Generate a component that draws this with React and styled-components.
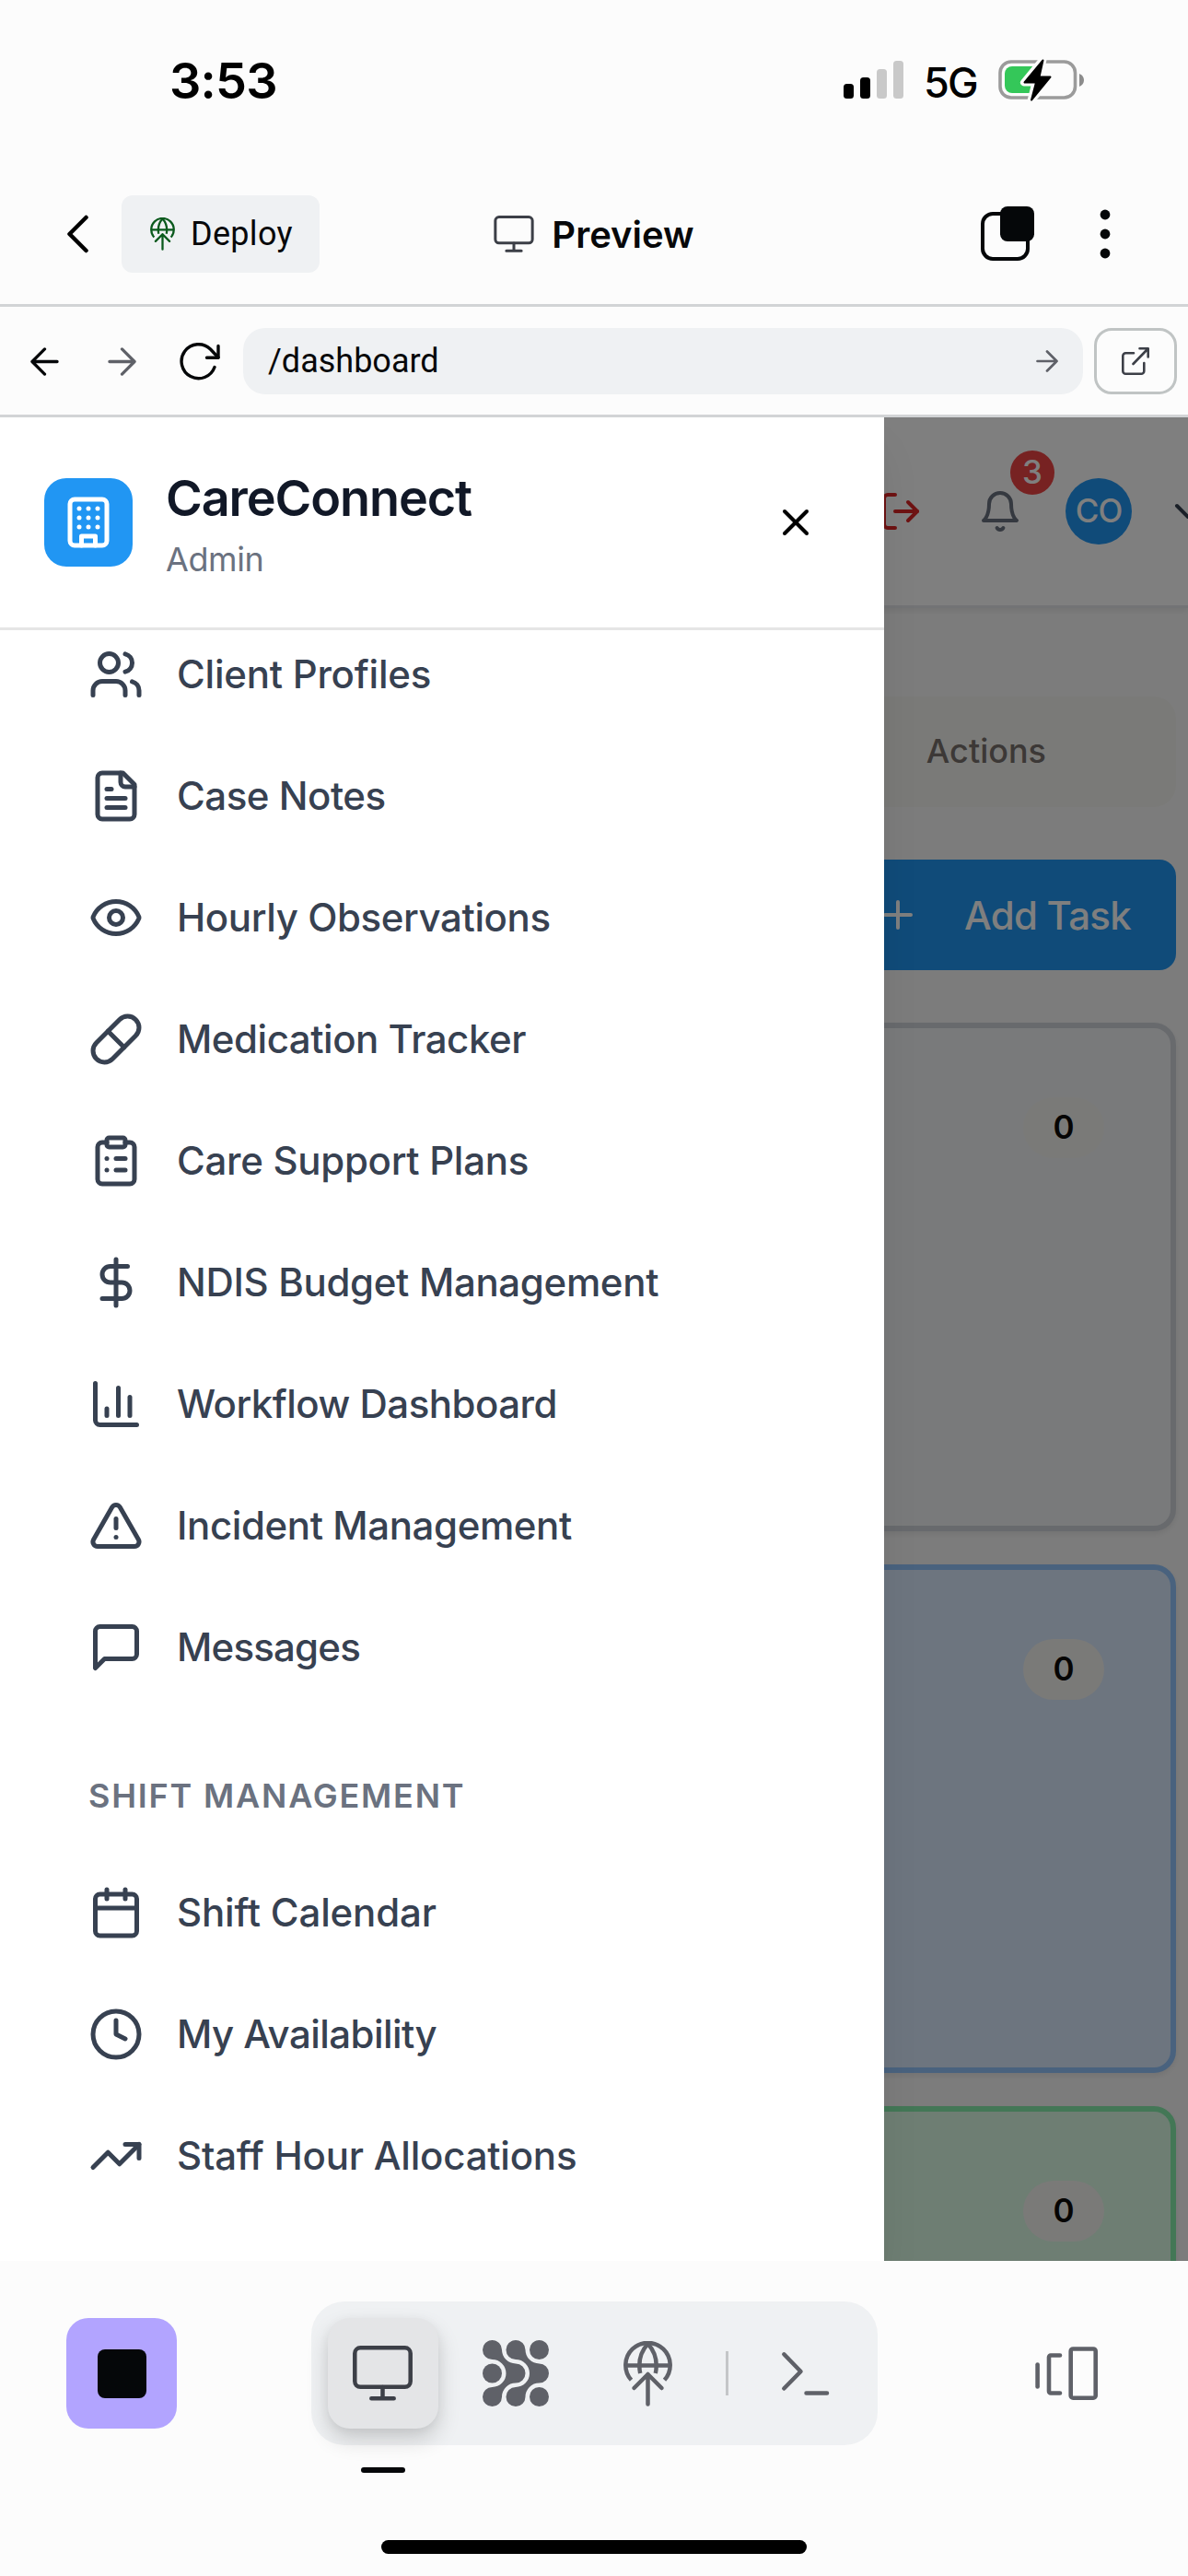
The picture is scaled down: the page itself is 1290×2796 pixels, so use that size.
import React from "react";
import styled, { createGlobalStyle } from "styled-components";

const SANS = `"Inter", "Liberation Sans", sans-serif`;
const PLEX = `"Roboto", "Liberation Sans", sans-serif`;

const GlobalStyle = createGlobalStyle`
  *, *::before, *::after { box-sizing: border-box; }
  html, body { margin: 0; padding: 0; background: #fcfcfc; }
  body { font-family: ${SANS}; }
  svg { display: block; flex: none; }
  button { border: 0; padding: 0; margin: 0; background: none; font: inherit; color: inherit; }
`;

const Screen = styled.div`
  width: 1290px;
  height: 2796px;
  display: flex;
  flex-direction: column;
  overflow: hidden;
  background: #fcfcfc;
`;

/* ---------- status bar ---------- */

const StatusBar = styled.header`
  height: 177px;
  flex: none;
  display: flex;
  justify-content: space-between;
  align-items: flex-start;
  padding: 55px 113px 0 184px;
`;

const Time = styled.div`
  font-size: 54px;
  font-weight: 600;
  line-height: 66px;
  letter-spacing: -0.8px;
  color: #000;
`;

const StatusIcons = styled.div`
  display: flex;
  align-items: flex-start;
  padding-top: 9px;
`;

const Network = styled.span`
  margin: 0 22px 0 22px;
  width: 59px;
  font-size: 45px;
  font-weight: 500;
  line-height: 52px;
  letter-spacing: -1.8px;
  color: #000;
`;

/* ---------- title bar ---------- */

const TitleBar = styled.div`
  height: 156px;
  flex: none;
  display: grid;
  grid-template-columns: 1fr auto 1fr;
  align-items: center;
  padding: 1px 72px 0;
  border-bottom: 3px solid #d2d4d6;
`;

const TitleLeft = styled.div`
  display: flex;
  align-items: center;
  gap: 36px;
`;

const DeployButton = styled.button`
  width: 215px;
  height: 84px;
  display: flex;
  align-items: center;
  gap: 17px;
  padding-left: 31px;
  border-radius: 12px;
  background: #eff1f3;
  color: #0b5a1d;
`;

const DeployLabel = styled.span`
  font-family: ${PLEX};
  font-size: 36px;
  line-height: 48px;
  letter-spacing: 0.3px;
  color: #07080a;
`;

const Title = styled.h1`
  margin: 0;
  display: flex;
  align-items: center;
  gap: 19px;
  font-family: ${SANS};
  font-size: 40px;
  font-weight: 580;
  letter-spacing: 0;
  color: #07080a;

  svg { color: #3c3f47; }
`;

const TitleRight = styled.div`
  display: flex;
  justify-content: flex-end;
  align-items: center;
  gap: 71px;
  padding-right: 12px;
  color: #050709;
`;

/* ---------- address bar ---------- */

const AddressBar = styled.div`
  height: 120px;
  flex: none;
  display: flex;
  align-items: center;
  gap: 12px;
  padding: 1px 12px 0 24px;
  border-bottom: 3px solid #d2d4d6;
  color: #050709;
`;

const NavButton = styled.button`
  width: ${(p) => p.$w || 48}px;
  height: 72px;
  flex: none;
  display: flex;
  align-items: center;
  justify-content: center;
  margin-right: ${(p) => p.$after || 0}px;
  color: ${(p) => (p.$muted ? "#5f6168" : "#050709")};
`;

const UrlField = styled.div`
  flex: 1;
  height: 72px;
  display: flex;
  align-items: center;
  justify-content: space-between;
  padding: 0 27px;
  border-radius: 24px;
  background: #eff1f3;
  color: #5f6168;
`;

const UrlText = styled.span`
  font-family: ${PLEX};
  font-size: 36px;
  line-height: 48px;
  color: #07080a;
`;

const OpenButton = styled.button`
  width: 90px;
  height: 72px;
  flex: none;
  display: flex;
  align-items: center;
  justify-content: center;
  border: 3px solid #c0c4c4;
  border-radius: 19px;
  color: #3c3f47;
`;

/* ---------- web view ---------- */

const WebView = styled.main`
  position: relative;
  height: 2001px;
  flex: none;
  overflow: hidden;
  background: #f9f9f9;
`;

const AppHeader = styled.div`
  height: 207px;
  display: flex;
  align-items: flex-start;
  padding: 66px 0 0 954px;
  background: #fff;
  border-bottom: 3px solid #e5e7eb;
  box-shadow: 0 3px 6px rgba(0, 0, 0, 0.08);
`;

const HeaderIcon = styled.div`
  width: 48px;
  height: 72px;
  flex: none;
  display: flex;
  align-items: center;
  margin-right: ${(p) => p.$after || 0}px;
  color: ${(p) => p.$color};
`;

const BellSlot = styled(HeaderIcon)`
  position: relative;
`;

const Badge = styled.span`
  position: absolute;
  left: 35px;
  top: -30px;
  width: 48px;
  height: 48px;
  border-radius: 50%;
  background: #ef4444;
  color: #fff;
  font-size: 35px;
  font-weight: 500;
  line-height: 47px;
  text-align: center;
`;

const Avatar = styled.div`
  width: 72px;
  height: 72px;
  flex: none;
  margin-right: 37px;
  border-radius: 50%;
  background: #2196f3;
  color: #fff;
  font-size: 35px;
  font-weight: 550;
  line-height: 71px;
  letter-spacing: -1px;
  text-align: center;
`;

const AppBody = styled.div`
  display: flex;
  flex-direction: column;
  align-items: stretch;
  padding: 96px 13px 0 12px;
`;

const TabList = styled.div`
  height: 120px;
  display: flex;
  align-items: center;
  justify-content: flex-end;
  padding: 0 141px 2px 0;
  border-radius: 24px;
  background: #f5f5f1;
  color: #78716c;
  font-size: 36px;
  font-weight: 500;
`;

const AddTask = styled.button`
  align-self: flex-end;
  width: 374px;
  height: 120px;
  margin: 57px 0;
  display: flex;
  align-items: center;
  gap: 48px;
  padding-left: 48px;
  border-radius: 18px;
  background: #2196f3;
  color: #fff;
  font-size: 42px;
  font-weight: 500;
  letter-spacing: -0.75px;
  white-space: nowrap;
`;

const Columns = styled.div`
  display: flex;
  flex-direction: column;
  gap: 36px;
`;

const Column = styled.section`
  height: 552px;
  flex: none;
  display: flex;
  justify-content: flex-end;
  align-items: flex-start;
  padding: 75px 72px;
  border: 6px solid ${(p) => p.$edge};
  border-radius: 24px;
  background: ${(p) => p.$fill};
  box-shadow: 0 3px 6px rgba(0, 0, 0, 0.08);
`;

const Count = styled.span`
  width: 88px;
  height: 66px;
  border-radius: 33px;
  background: #f5f5f1;
  color: #0c0a09;
  font-size: 35px;
  font-weight: 600;
  line-height: 65px;
  text-align: center;
`;

const Dimmer = styled.div`
  position: absolute;
  inset: 0;
  background: rgba(0, 0, 0, 0.5);
`;

const Sidebar = styled.aside`
  position: absolute;
  left: 0;
  top: 0;
  width: 960px;
  height: 100%;
  display: flex;
  flex-direction: column;
  background: #fff;
  box-shadow: 0 30px 45px -9px rgba(0, 0, 0, 0.1), 0 12px 18px -12px rgba(0, 0, 0, 0.1);
`;

const SidebarHeader = styled.div`
  height: 231px;
  flex: none;
  display: flex;
  align-items: center;
  padding: 0 72px 0 48px;
  border-bottom: 3px solid #e5e5e5;
`;

const Logo = styled.div`
  width: 96px;
  height: 96px;
  display: flex;
  align-items: center;
  justify-content: center;
  border-radius: 24px;
  background: #2196f3;
  color: #fff;
`;

const Brand = styled.div`
  flex: 1;
  margin-left: 36px;
`;

const BrandName = styled.div`
  padding-top: 4px;
  font-size: 54px;
  font-weight: 600;
  line-height: 76px;
  letter-spacing: -1.1px;
  color: #111827;
`;

const BrandRole = styled.div`
  font-size: 36px;
  line-height: 56px;
  letter-spacing: -0.4px;
  color: #6b7280;
`;

const NavScroll = styled.nav`
  display: flex;
  flex-direction: column;
  overflow: hidden;
  padding-left: 96px;
`;

const NavGroup = styled.div`
  display: flex;
  flex-direction: column;
  margin-top: ${(p) => p.$offset || 0}px;
`;

const NavItem = styled.a`
  height: 132px;
  display: flex;
  align-items: center;
  gap: 36px;
  color: #374151;
`;

const NavLabel = styled.span`
  padding-bottom: 1px;
  font-size: 42px;
  font-weight: 500;
  letter-spacing: ${(p) => p.$track}px;
  white-space: nowrap;
`;

const GroupLabel = styled.div`
  height: 60px;
  margin-top: 66px;
  color: #6b7280;
  font-size: 36px;
  font-weight: 600;
  line-height: 59px;
  letter-spacing: 1.8px;
`;

/* ---------- bottom dock ---------- */

const BottomBar = styled.footer`
  flex: 1;
  display: flex;
  flex-direction: column;
  padding-top: 44px;
`;

const DockRow = styled.div`
  height: 156px;
  display: flex;
  align-items: center;
  justify-content: space-between;
  padding: 0 72px;
`;

const StopButton = styled.button`
  width: 120px;
  height: 120px;
  display: flex;
  align-items: center;
  justify-content: center;
  border-radius: 24px;
  background: #b2a4ff;
`;

const StopSquare = styled.span`
  width: 53px;
  height: 53px;
  border-radius: 8px;
  background: #050709;
`;

const Dock = styled.div`
  height: 156px;
  display: flex;
  align-items: center;
  gap: 24px;
  padding: 0 18px;
  border-radius: 36px;
  background: #eff1f3;
`;

const DockTab = styled.button`
  width: 120px;
  height: 120px;
  display: flex;
  align-items: center;
  justify-content: center;
  border-radius: 24px;
  color: ${(p) => (p.$active ? "#3c3f47" : "#5f6168")};
  background: ${(p) => (p.$active ? "#e4e5e7" : "transparent")};
  box-shadow: ${(p) => (p.$active ? "0 12px 24px rgba(0,0,0,0.16), 0 3px 12px rgba(0,0,0,0.05)" : "none")};
`;

const DockDivider = styled.span`
  width: 3px;
  height: 48px;
  background: #c4c6c8;
`;

const PageMark = styled.span`
  width: 48px;
  height: 6px;
  margin: 24px 0 0 392px;
  border-radius: 3px;
  background: #050709;
`;

const HomeIndicator = styled.span`
  align-self: center;
  width: 462px;
  height: 15px;
  margin-top: 73px;
  border-radius: 8px;
  background: #000;
`;

/* ---------- icons ---------- */

const stroke = { fill: "none", stroke: "currentColor", strokeLinecap: "round", strokeLinejoin: "round" };

const Icon = ({ name, size = 60, w = 2 }) => (
  <svg width={size} height={size} viewBox="0 0 24 24" {...stroke} strokeWidth={w}>
    {ICONS[name].map((d) => (
      <path key={d} d={d} />
    ))}
  </svg>
);

const ICONS = {
  building: [
    "M6 2h12a2 2 0 0 1 2 2v16a2 2 0 0 1-2 2H6a2 2 0 0 1-2-2V4a2 2 0 0 1 2-2z",
    "M9 22v-4h6v4", "M8 6h.01", "M16 6h.01", "M12 6h.01", "M12 10h.01", "M12 14h.01",
    "M16 10h.01", "M16 14h.01", "M8 10h.01", "M8 14h.01",
  ],
  close: ["M18 6 6 18", "m6 6 12 12"],
  users: [
    "M16 21v-2a4 4 0 0 0-4-4H6a4 4 0 0 0-4 4v2", "M9 3a4 4 0 1 0 0 8a4 4 0 1 0 0-8z",
    "M22 21v-2a4 4 0 0 0-3-3.87", "M16 3.13a4 4 0 0 1 0 7.75",
  ],
  file: [
    "M15 2H6a2 2 0 0 0-2 2v16a2 2 0 0 0 2 2h12a2 2 0 0 0 2-2V7Z", "M14 2v4a2 2 0 0 0 2 2h4",
    "M10 9H8", "M16 13H8", "M16 17H8",
  ],
  eye: [
    "M2.062 12.348a1 1 0 0 1 0-.696 10.75 10.75 0 0 1 19.876 0 1 1 0 0 1 0 .696 10.75 10.75 0 0 1-19.876 0",
    "M12 9a3 3 0 1 0 0 6a3 3 0 1 0 0-6z",
  ],
  pill: ["m10.5 20.5 10-10a4.95 4.95 0 1 0-7-7l-10 10a4.95 4.95 0 1 0 7 7Z", "m8.5 8.5 7 7"],
  clipboard: [
    "M9 2h6a1 1 0 0 1 1 1v2a1 1 0 0 1-1 1H9a1 1 0 0 1-1-1V3a1 1 0 0 1 1-1z",
    "M16 4h2a2 2 0 0 1 2 2v14a2 2 0 0 1-2 2H6a2 2 0 0 1-2-2V6a2 2 0 0 1 2-2h2",
    "M12 11h4", "M12 16h4", "M8 11h.01", "M8 16h.01",
  ],
  dollar: ["M12 2v20", "M17 5H9.5a3.5 3.5 0 0 0 0 7h5a3.5 3.5 0 0 1 0 7H6"],
  chart: ["M3 3v16a2 2 0 0 0 2 2h16", "M18 17V9", "M13 17V5", "M8 17v-3"],
  alert: ["m21.73 18-8-14a2 2 0 0 0-3.48 0l-8 14A2 2 0 0 0 4 21h16a2 2 0 0 0 1.73-3", "M12 9v4", "M12 17h.01"],
  message: ["M21 15a2 2 0 0 1-2 2H7l-4 4V5a2 2 0 0 1 2-2h14a2 2 0 0 1 2 2z"],
  calendar: ["M8 2v4", "M16 2v4", "M5 4h14a2 2 0 0 1 2 2v14a2 2 0 0 1-2 2H5a2 2 0 0 1-2-2V6a2 2 0 0 1 2-2z", "M3 10h18"],
  clock: ["M12 2a10 10 0 1 0 0 20a10 10 0 1 0 0-20z", "M12 6v6l4 2"],
  trend: ["M22 7l-8.5 8.5-5-5L2 17", "M16 7h6v6"],
  logout: ["M9 21H5a2 2 0 0 1-2-2V5a2 2 0 0 1 2-2h4", "M16 17l5-5-5-5", "M21 12H9"],
  bell: ["M6 8a6 6 0 0 1 12 0c0 7 3 9 3 9H3s3-2 3-9", "M10.3 21a1.94 1.94 0 0 0 3.4 0"],
  chevron: ["m6 9 6 6 6-6"],
  plus: ["M5 12h14", "M12 5v14"],
};

const SignalIcon = () => (
  <svg width="65" height="43" viewBox="0 0 65 43">
    <rect x="0" y="27" width="11" height="16" rx="3.5" fill="#000" />
    <rect x="18" y="20" width="11" height="23" rx="3.5" fill="#000" />
    <rect x="36" y="11" width="11" height="32" rx="3.5" fill="#c9c9c9" />
    <rect x="54" y="2" width="11" height="41" rx="3.5" fill="#c9c9c9" />
  </svg>
);

const BatteryIcon = () => (
  <svg width="93" height="46" viewBox="0 0 93 46">
    <rect x="2" y="3" width="81.5" height="39" rx="12" fill="none" stroke="#9b9b9b" strokeWidth="3.6" />
    <path d="M88 16c3.2 1.2 5 4 5 7s-1.8 5.8-5 7z" fill="#8c8c8c" />
    <path d="M15 8h29v29H15a8 8 0 0 1-8-8V16a8 8 0 0 1 8-8z" fill="#34c759" />
    <path d="M48.5 0.5 28 25.5h12.5L35.5 45.5 57 19.5H44.5z" fill="#000" stroke="#fcfcfc" strokeWidth="8" strokeLinejoin="round" />
    <path d="M48.5 1.5 28.5 25.5h12.5L36 44.5 56.5 19.5H44.5z" fill="#000" stroke="#000" strokeWidth="2" strokeLinejoin="round" />
  </svg>
);

const BackChevron = () => (
  <svg width="24" height="42" viewBox="0 0 24 42" {...stroke} strokeWidth="4.5">
    <path d="M21.5 3 3.5 21l18 18" />
  </svg>
);

const GlobeUp = ({ width, height }) => (
  <svg width={width} height={height} viewBox="0 0 53 71" fill="none" stroke="currentColor" strokeWidth="4.5" strokeLinejoin="round">
    <path d="M8.5 42.3A24.2 24.2 0 1 1 44.5 42.3" />
    <path d="M2.5 26.4h48" />
    <path d="M26.5 3C20 10 17.3 18 17.3 26.5c0 3 .3 5.8.9 8.5" />
    <path d="M26.5 3C33 10 35.7 18 35.7 26.5c0 3-.3 5.8-.9 8.5" />
    <path d="M11.5 51 26.5 36l15 15M26.5 36v32.5" strokeLinecap="round" />
  </svg>
);

const Monitor = ({ width, height }) => (
  <svg width={width} height={height} viewBox="0 0 65 60" {...stroke} strokeWidth="4.5">
    <rect x="2.3" y="2.3" width="60.4" height="42.5" rx="6" />
    <path d="M32.5 45v12M20.3 57.3h24.4" />
  </svg>
);

const TabsIcon = () => (
  <svg width="58" height="60" viewBox="0 0 58 60">
    <rect x="2" y="8" width="49" height="49" rx="11" fill="none" stroke="currentColor" strokeWidth="4" />
    <rect x="21" y="0" width="37" height="38" rx="8" fill="currentColor" />
  </svg>
);

const MoreIcon = () => (
  <svg width="12" height="56" viewBox="0 0 12 56" fill="currentColor">
    <circle cx="6" cy="7" r="5.4" />
    <circle cx="6" cy="28" r="5.4" />
    <circle cx="6" cy="49" r="5.4" />
  </svg>
);

const Arrow = ({ size, flip, w = 3.4 }) => (
  <svg width={size} height={size} viewBox="0 0 32 32" {...stroke} strokeWidth={w} transform={flip ? "scale(-1 1)" : undefined}>
    <path d="M2 16h28M16 2l14 14-14 14" />
  </svg>
);

const Reload = () => (
  <svg width="44" height="42" viewBox="0 0 44 42" {...stroke} strokeWidth="3.4">
    <path d="M38 27.5A18.5 18.5 0 1 1 33.5 8L42 17" />
    <path d="M42 4.5V17.3H29.5" />
  </svg>
);

const OpenIcon = () => (
  <svg width="30" height="30" viewBox="0 0 30 30" {...stroke} strokeWidth="2.6">
    <path d="M13 6.2H4.3a3 3 0 0 0-3 3v16.5a3 3 0 0 0 3 3h17a3 3 0 0 0 3-3V17" />
    <path d="M19.5 1.3h9.2v9.2M28.5 1.5 12.5 18" />
  </svg>
);

const AgentIcon = () => {
  const ribbon =
    "M10.5 21A10.5 10.5 0 1 1 21 10.5A15 15 0 0 0 36 25.5A10.5 10.5 0 0 1 36 46.5A15 15 0 0 0 21 61.5A10.5 10.5 0 1 1 10.5 51A15 15 0 0 0 10.5 21Z";
  return (
    <svg width="72" height="72" viewBox="0 0 72 72" fill="currentColor">
      <path d={ribbon} />
      <path d={ribbon} transform="translate(25.5 0)" />
      <circle cx="61.5" cy="10.5" r="10.5" />
      <circle cx="10.5" cy="36" r="10.5" />
      <circle cx="61.5" cy="61.5" r="10.5" />
    </svg>
  );
};

const ShellIcon = () => (
  <svg width="54" height="50" viewBox="0 0 54 50" {...stroke} strokeWidth="4.5">
    <path d="M3.3 4.3 21.5 23 3.3 41.5M27.5 46.5H50" />
  </svg>
);

const PanelsIcon = () => (
  <svg width="68" height="58" viewBox="0 0 68 58" {...stroke} strokeWidth="4.6">
    <path d="M2.6 19.5v24" />
    <path d="M27 9.5H17a2 2 0 0 0-2 2v37a2 2 0 0 0 2 2h10" />
    <rect x="38.7" y="2.5" width="27" height="53.2" rx="2.5" />
  </svg>
);

/* ---------- data ---------- */

/* icon, label, letter spacing */
const CARE_LINKS = [
  ["users", "Client Profiles", -0.24],
  ["file", "Case Notes", -0.48],
  ["eye", "Hourly Observations", -0.4],
  ["pill", "Medication Tracker", -0.47],
  ["clipboard", "Care Support Plans", -0.3],
  ["dollar", "NDIS Budget Management", -0.33],
  ["chart", "Workflow Dashboard", -0.5],
  ["alert", "Incident Management", -0.4],
  ["message", "Messages", -0.8],
];

const SHIFT_LINKS = [
  ["calendar", "Shift Calendar", -0.17],
  ["clock", "My Availability", -0.57],
  ["trend", "Staff Hour Allocations", -0.22],
];

const TASK_COLUMNS = [
  { edge: "#d1d5db", fill: "#f3f4f6", count: 0 },
  { edge: "#93c5fd", fill: "#dbeafe", count: 0 },
  { edge: "#86efac", fill: "#dcfce7", count: 0 },
];

const links = (items) =>
  items.map(([icon, label, track]) => (
    <NavItem key={label}>
      <Icon name={icon} />
      <NavLabel $track={track}>{label}</NavLabel>
    </NavItem>
  ));

export default function App() {
  return (
    <>
      <GlobalStyle />
      <Screen>
        <StatusBar>
          <Time>3:53</Time>
          <StatusIcons>
            <SignalIcon />
            <Network>5G</Network>
            <BatteryIcon />
          </StatusIcons>
        </StatusBar>

        <TitleBar>
          <TitleLeft>
            <BackChevron />
            <DeployButton>
              <GlobeUp width={27} height={36} />
              <DeployLabel>Deploy</DeployLabel>
            </DeployButton>
          </TitleLeft>
          <Title>
            <Monitor width={44} height={40} />
            Preview
          </Title>
          <TitleRight>
            <TabsIcon />
            <MoreIcon />
          </TitleRight>
        </TitleBar>

        <AddressBar>
          <NavButton $after={24}><Arrow size={31} flip /></NavButton>
          <NavButton $after={24} $muted><Arrow size={31} /></NavButton>
          <NavButton $after={10} $w={50}><Reload /></NavButton>
          <UrlField>
            <UrlText>/dashboard</UrlText>
            <Arrow size={24} w={3.6} />
          </UrlField>
          <OpenButton><OpenIcon /></OpenButton>
        </AddressBar>

        <WebView>
          <AppHeader>
            <HeaderIcon $color="#dc2626" $after={60}><Icon name="logout" size={48} /></HeaderIcon>
            <BellSlot $color="#6b7280" $after={47}>
              <Icon name="bell" size={48} />
              <Badge>3</Badge>
            </BellSlot>
            <Avatar>CO</Avatar>
            <HeaderIcon $color="#374151"><Icon name="chevron" size={48} /></HeaderIcon>
          </AppHeader>
          <AppBody>
            <TabList>Actions</TabList>
            <AddTask>
              <Icon name="plus" size={48} />
              Add Task
            </AddTask>
            <Columns>
              {TASK_COLUMNS.map((c) => (
                <Column key={c.edge} $edge={c.edge} $fill={c.fill}>
                  <Count>{c.count}</Count>
                </Column>
              ))}
            </Columns>
          </AppBody>
          <Dimmer />
          <Sidebar>
            <SidebarHeader>
              <Logo><Icon name="building" /></Logo>
              <Brand>
                <BrandName>CareConnect</BrandName>
                <BrandRole>Admin</BrandRole>
              </Brand>
              <Icon name="close" size={48} />
            </SidebarHeader>
            <NavScroll>
              <NavGroup $offset={-18}>{links(CARE_LINKS)}</NavGroup>
              <GroupLabel>SHIFT MANAGEMENT</GroupLabel>
              <NavGroup $offset={30}>{links(SHIFT_LINKS)}</NavGroup>
            </NavScroll>
          </Sidebar>
        </WebView>

        <BottomBar>
          <DockRow>
            <StopButton><StopSquare /></StopButton>
            <Dock>
              <DockTab $active><Monitor width={65} height={60} /></DockTab>
              <DockTab><AgentIcon /></DockTab>
              <DockTab><GlobeUp width={53} height={71} /></DockTab>
              <DockDivider />
              <DockTab><ShellIcon /></DockTab>
            </Dock>
            <DockTab><PanelsIcon /></DockTab>
          </DockRow>
          <PageMark />
          <HomeIndicator />
        </BottomBar>
      </Screen>
    </>
  );
}
